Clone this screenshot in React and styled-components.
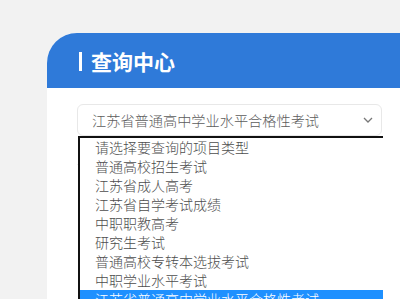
import React from 'react'
import styled, { createGlobalStyle } from 'styled-components'

const Global = createGlobalStyle`
  html, body {
    margin: 0;
    padding: 0;
    background: #f2f2f2;
    font-family: "Noto Sans CJK SC", "Noto Sans", sans-serif;
  }
`

const Page = styled.div`
  width: 400px;
  height: 299px;
  overflow: hidden;
  padding: 33px 0 0 47px;
  box-sizing: border-box;
  display: flex;
`

const Card = styled.div`
  flex: 1;
  background: #fff;
  border-top-left-radius: 30px;
  overflow: hidden;
  display: flex;
  flex-direction: column;
`

const Header = styled.div`
  height: 55px;
  background: #2f7ad9;
  display: flex;
  align-items: center;
  padding-left: 32px;
  flex-shrink: 0;
`

const Bar = styled.span`
  width: 3px;
  height: 19px;
  background: #fff;
  margin-right: 9px;
  margin-top: 2px;
`

const Title = styled.h2`
  margin: 0;
  color: #fff;
  font-size: 21px;
  font-weight: 700;
`

const Body = styled.div`
  position: relative;
  padding: 16px 18px 0 30px;
`

const SelectBox = styled.div`
  width: 305px;
  height: 32px;
  box-sizing: border-box;
  border: 1px solid #e8e8e8;
  border-radius: 6px;
  display: flex;
  align-items: center;
  justify-content: space-between;
  padding: 0 8px 0 14px;
  color: #5c5c5c;
  font-size: 14.2px;
  font-weight: 300;
`

const Divider = styled.div`
  margin-top: 28px;
  border-top: 1px solid #eeeeee;
`

const List = styled.ul`
  position: absolute;
  left: 31px;
  top: 48px;
  width: 303px;
  margin: 0;
  padding: 0;
  list-style: none;
  background: #fff;
  border-top: 2px solid #111;
  border-left: 2px solid #111;
`

const Item = styled.li`
  height: 19px;
  line-height: 19px;
  padding-left: 15px;
  font-size: 14px;
  font-weight: 300;
  white-space: nowrap;
  color: ${p => (p.$active ? '#fff' : '#4d4d4d')};
  background: ${p => (p.$active ? '#1e90ff' : 'transparent')};
`

const options = [
  '请选择要查询的项目类型',
  '普通高校招生考试',
  '江苏省成人高考',
  '江苏省自学考试成绩',
  '中职职教高考',
  '研究生考试',
  '普通高校专转本选拔考试',
  '中职学业水平考试',
  '江苏省普通高中学业水平合格性考试',
]

const Chevron = () => (
  <svg width="10" height="6" viewBox="0 0 10 6">
    <path d="M1 1l4 4 4-4" fill="none" stroke="#777" strokeWidth="1.3" />
  </svg>
)

export default function App() {
  return (
    <>
      <Global />
      <Page>
        <Card>
          <Header>
            <Bar />
            <Title>查询中心</Title>
          </Header>
          <Body>
            <SelectBox>
              <span>江苏省普通高中学业水平合格性考试</span>
              <Chevron />
            </SelectBox>
            <Divider />
            <List>
              {options.map((o, i) => (
                <Item key={o} $active={i === options.length - 1}>{o}</Item>
              ))}
            </List>
          </Body>
        </Card>
      </Page>
    </>
  )
}
